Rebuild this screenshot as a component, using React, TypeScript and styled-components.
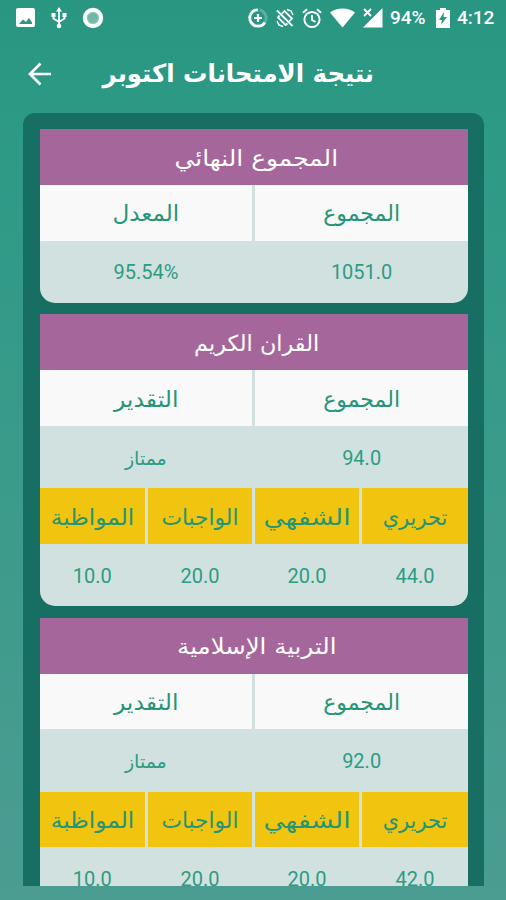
import React from "react";
import styled, { createGlobalStyle } from "styled-components";

const GlobalStyle = createGlobalStyle`
  * { box-sizing: border-box; }
  body { margin: 0; overflow: hidden; }
`;

const Screen = styled.main`
  width: 506px;
  height: 900px;
  overflow: hidden;
  display: flex;
  flex-direction: column;
  direction: ltr;
  background: linear-gradient(180deg, #299681 0%, #2d9a86 14%, #4b9c91 100%);
  font-family: "DejaVu Sans", "Noto Sans", sans-serif;
`;

const StatusBar = styled.div`
  height: 36px;
  flex: none;
  display: flex;
  align-items: center;
  justify-content: space-between;
  padding: 0 11px 0 15px;
  color: #fff;
`;

const IconGroup = styled.div<{ $gap: number }>`
  display: flex;
  align-items: center;
  gap: ${(p) => p.$gap}px;
  svg { display: block; flex: none; }
`;

const StatusText = styled.span<{ $w: number }>`
  width: ${(p) => p.$w}px;
  font: 500 19px/36px Roboto, sans-serif;
  white-space: nowrap;
`;

const AppBar = styled.header`
  height: 77px;
  flex: none;
  display: flex;
  align-items: center;
  padding: 0 0 2px 27px;
`;

const BackButton = styled.button`
  border: 0;
  padding: 0;
  background: none;
  width: 26px;
  height: 26px;
  svg { display: block; }
`;

const TitleBox = styled.div`
  width: 272px;
  margin-left: 49px;
  display: flex;
  justify-content: center;
`;

const Fit = styled.span<{ $sx: number; $dy: number }>`
  display: block;
  white-space: nowrap;
  transform: translateY(${(p) => p.$dy}px) scaleX(${(p) => p.$sx});
`;

const Title = styled.h1`
  margin: 0;
  color: #fff;
  font-size: 25px;
  line-height: 36px;
  font-weight: 700;
`;

const Panel = styled.section`
  height: 773px;
  flex: none;
  margin: 0 22px 0 23px;
  padding: 16px 16px 0 16.5px;
  overflow: hidden;
  border-radius: 12px 12px 0 0;
  background: #176e63;
  display: flex;
  flex-direction: column;
  gap: 11.2px;
`;

const Card = styled.article`
  flex: none;
  overflow: hidden;
  border-radius: 0 0 15px 15px;
  background: #d1e1df;
`;

const CardHeader = styled.h2`
  margin: 0;
  height: 56px;
  padding-left: 6px;
  display: flex;
  align-items: center;
  justify-content: center;
  background: #a5669b;
  color: #fff;
  font-size: 22px;
  font-weight: 400;
`;

const Row = styled.div<{ $cols: 2 | 4 }>`
  display: grid;
  direction: rtl;
  grid-template-columns: ${(p) => (p.$cols === 4 ? "106fr 104fr 104fr 105.5fr" : "1fr 1fr")};
  column-gap: 3px;
`;

const HeadCell = styled.div<{ $tone: "white" | "gold" }>`
  height: 55.6px;
  display: flex;
  align-items: center;
  justify-content: center;
  background: ${(p) => (p.$tone === "gold" ? "#f1c40f" : "#f9f9f9")};
  color: #259575;
  font-size: 22px;
`;

const ValueCell = styled.div<{ $arabic?: boolean }>`
  height: 62.5px;
  padding-top: 1px;
  display: flex;
  align-items: center;
  justify-content: center;
  direction: ltr;
  color: #2c9c83;
  font-family: ${(p) => (p.$arabic ? '"DejaVu Sans"' : "Roboto")}, sans-serif;
  font-size: ${(p) => (p.$arabic ? 19 : 20)}px;
`;

type Term = { text: string; sx: number };

const total: Term = { text: "المجموع", sx: 1 };
const average: Term = { text: "المعدل", sx: 1.05 };
const grade: Term = { text: "التقدير", sx: 1.07 };
const parts: Term[] = [
  { text: "تحريري", sx: 0.95 },
  { text: "الشفهي", sx: 1.21 },
  { text: "الواجبات", sx: 0.99 },
  { text: "المواظبة", sx: 1.06 },
];

type Result = { title: Term; heads: Term[]; values: string[]; marks?: string[] };

const results: Result[] = [
  { title: { text: "المجموع النهائي", sx: 1.13 }, heads: [total, average], values: ["1051.0", "95.54%"] },
  { title: { text: "القران الكريم", sx: 1.015 }, heads: [total, grade], values: ["94.0", "ممتاز"], marks: ["44.0", "20.0", "20.0", "10.0"] },
  { title: { text: "التربية الإسلامية", sx: 1.11 }, heads: [total, grade], values: ["92.0", "ممتاز"], marks: ["42.0", "20.0", "20.0", "10.0"] },
];

const Label = ({ term, dy = 0 }: { term: Term; dy?: number }) => (
  <Fit $sx={term.sx} $dy={dy} dir="rtl">{term.text}</Fit>
);

const ResultCard = ({ result }: { result: Result }) => (
  <Card>
    <CardHeader><Label term={result.title} dy={1} /></CardHeader>
    <Row $cols={2}>
      {result.heads.map((h) => <HeadCell key={h.text} $tone="white"><Label term={h} dy={1} /></HeadCell>)}
    </Row>
    <Row $cols={2}>
      {result.values.map((v) => <ValueCell key={v} $arabic={/[\u0600-\u06ff]/.test(v)}>{v}</ValueCell>)}
    </Row>
    {result.marks && (
      <>
        <Row $cols={4}>
          {parts.map((p) => <HeadCell key={p.text} $tone="gold"><Label term={p} dy={1} /></HeadCell>)}
        </Row>
        <Row $cols={4}>
          {result.marks.map((m, i) => <ValueCell key={i}>{m}</ValueCell>)}
        </Row>
      </>
    )}
  </Card>
);

const PictureIcon = () => (
  <svg width="21" height="20" viewBox="0 0 21 20">
    <path fill="#fff" fillRule="evenodd" d="M3 0h15a2 2 0 0 1 2 2v15a2 2 0 0 1-2 2H3a2 2 0 0 1-2-2V2a2 2 0 0 1 2-2ZM4 16h13v-1.500l-3-4.500-3 4-3-2.500Z" />
  </svg>
);
const UsbIcon = () => (
  <svg width="16" height="22" viewBox="0 0 16 22" fill="none" stroke="#fff" strokeWidth="1.8">
    <path d="M8 3v16M2.500 8v3.500L8 15M13.500 8v3.500L8 15" />
    <path fill="#fff" stroke="none" d="M8 0l3 4.500H5zM0.500 6h4v4h-4zM11.500 6h4v4h-4z" />
    <circle cx="8" cy="19" r="2.300" fill="#fff" stroke="none" />
  </svg>
);
const RecordIcon = () => (
  <svg width="22" height="22" viewBox="0 0 22 22">
    <circle cx="11" cy="11" r="8.200" fill="#8ccabb" stroke="#fff" strokeWidth="4" />
    <circle cx="11" cy="11" r="5" fill="#70b8a7" />
  </svg>
);
const DataSaverIcon = () => (
  <svg width="20" height="20" viewBox="0 0 20 20" fill="none" stroke="#fff">
    <path strokeWidth="2.800" d="M10 1.800A8.200 8.200 0 1 0 17 14.300" />
    <path strokeWidth="2.800" opacity=".25" d="M11.500 1.900A8.200 8.200 0 0 1 17.300 13.500" />
    <path strokeWidth="2.200" d="M10 6v8M6 10h8" />
  </svg>
);
const RotateOffIcon = () => (
  <svg width="20" height="20" viewBox="0 0 20 20" fill="none" stroke="#fff" strokeWidth="1.800">
    <path d="M8 4.500 9.500 3 17 10.500 15.500 12M4.500 7.500 3 9.500 10.500 17 12.500 15.500" />
    <path d="M2 2.500 17.500 18" />
    <path strokeWidth="1.500" d="M12 1.500l4 1.500 2 4M2 13l2 4 4 1.500M8 4.500 6.500 6M15.500 12 14 13.500" />
  </svg>
);
const AlarmIcon = () => (
  <svg width="20" height="21" viewBox="0 0 20 21" fill="none" stroke="#fff" strokeWidth="2">
    <circle cx="10" cy="11.500" r="7.600" />
    <path d="M10 7v5l3.500 2M1 4.700l4-3.500M19 4.700l-4-3.500" />
  </svg>
);
const WifiIcon = () => (
  <svg width="26" height="20" viewBox="0 0 26 20">
    <path fill="#fff" d="M1 4.500C8-1 19-1 26 4.500L13.500 19.500Z" />
  </svg>
);
const SignalIcon = () => (
  <svg width="21" height="20" viewBox="0 0 21 20">
    <path fill="#fff" d="M20.500 0v19.500H1L10 10.500Z" />
    <path stroke="#fff" strokeWidth="1.800" d="M2 1l7 7M9 1 2 8" />
  </svg>
);
const BatteryIcon = () => (
  <svg width="14" height="20" viewBox="0 0 14 20">
    <path fill="#fff" fillRule="evenodd" d="M4 0h6v2h4v18H0V2h4ZM8 4l-5 8h3l-1 5 6-8H7.500Z" />
  </svg>
);

const BackIcon = () => (
  <svg width="26" height="26" viewBox="0 0 26 26" fill="none" stroke="#fff" strokeWidth="2.700">
    <path d="M24 13H3.500M13.500 2.500 3 13l10.500 10.500" />
  </svg>
);

export default function App() {
  return (
    <Screen>
      <GlobalStyle />
      <StatusBar>
        <IconGroup $gap={15}><PictureIcon /><UsbIcon /><RecordIcon /></IconGroup>
        <IconGroup $gap={7}>
          <DataSaverIcon /><RotateOffIcon /><AlarmIcon /><WifiIcon /><SignalIcon />
          <StatusText $w={39}>94%</StatusText><BatteryIcon /><StatusText $w={38}>4:12</StatusText>
        </IconGroup>
      </StatusBar>
      <AppBar>
        <BackButton aria-label="رجوع"><BackIcon /></BackButton>
        <TitleBox><Title><Label term={{ text: "نتيجة الامتحانات اكتوبر", sx: 0.975 }} /></Title></TitleBox>
      </AppBar>
      <Panel>{results.map((r) => <ResultCard key={r.title.text} result={r} />)}</Panel>
    </Screen>
  );
}
